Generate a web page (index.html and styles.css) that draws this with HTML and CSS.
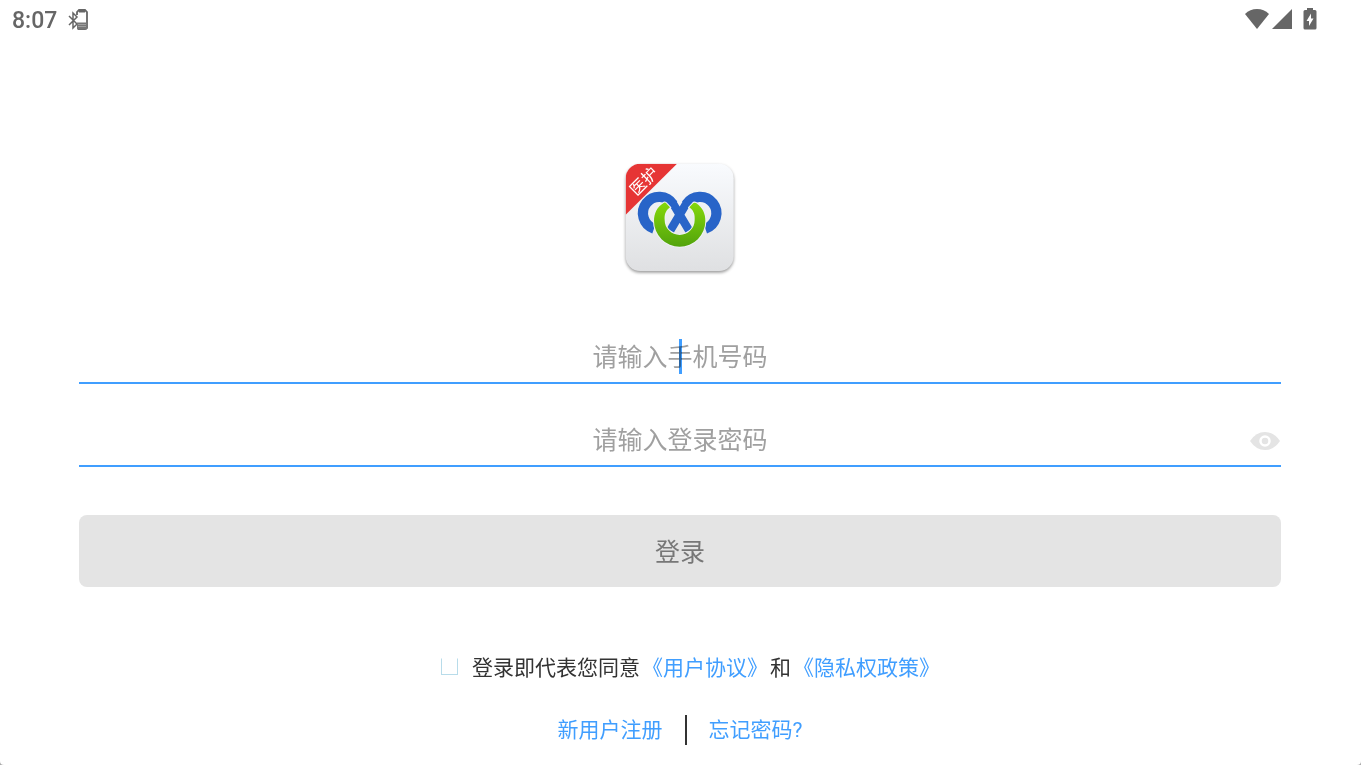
FILE: index.html
```html
<!DOCTYPE html>
<html lang="zh-CN">
<head>
    <meta charset="utf-8">
    <meta name="viewport" content="width=device-width, initial-scale=1.0">
    <title>登录</title>
    <link rel="stylesheet" href="styles.css">
</head>
<body>

    <!-- 状态栏 -->
    <header class="status-bar">
        <div class="status-left">
            <span class="clock">8:07</span>
            <svg class="bt-icon" width="22" height="24" viewBox="0 0 22 24" fill="none" stroke="#666">
                <path d="M1 8l8 8-4 4V5l4 4-8 8" stroke-width="1.5"/>
                <path d="M9 7V4l2-2h6l2 2v16l-2 1h-7" stroke-width="1.8"/>
                <path d="M11 3h6" stroke-width="3"/>
                <path d="M9 14.500h10v7H9z" fill="#777" stroke="none"/>
                <path d="M10 16.500h8M10 18.500h8" stroke="#bbb" stroke-width=".6"/>
            </svg>
        </div>
        <div class="status-right">
            <svg class="wifi-icon" width="26" height="22" viewBox="0 0 26 22">
                <path d="M13 21L1 6Q6 1 13 1t12 5z" fill="#666"/>
            </svg>
            <svg class="signal-icon" width="20" height="20" viewBox="0 0 20 20">
                <path d="M20 0v20H0z" fill="#666"/>
            </svg>
            <svg class="battery-icon" width="14" height="22" viewBox="0 0 14 22">
                <path d="M4 0h6v2h2q1.500 0 1.500 1.500v16.500q0 1.500-1.500 1.500H2q-1.500 0-1.500-1.500V3.500Q.5 2 2 2h2z" fill="#666"/>
                <path d="M8 5.500L3.500 13H6v5l4.500-7.500H8z" fill="#fff"/>
            </svg>
        </div>
    </header>

    <main class="login">
        <svg class="logo" width="130" height="126" viewBox="0 0 390 378" role="img" aria-label="医护">
            <defs>
                <linearGradient id="tile" x1="0" y1="0" x2="0" y2="1">
                    <stop offset="0" stop-color="#f9fbfe"/>
                    <stop offset="1" stop-color="#dfe0e2"/>
                </linearGradient>
                <linearGradient id="green" x1="0" y1="0" x2="0" y2="1">
                    <stop offset="0" stop-color="#85d80b"/>
                    <stop offset="1" stop-color="#52a30c"/>
                </linearGradient>
                <clipPath id="tileClip">
                    <rect x="32" y="26" width="324" height="322" rx="44"/>
                </clipPath>
            </defs>
            <rect class="logo-tile" x="32" y="26" width="324" height="322" rx="44" fill="url(#tile)"/>
            <path d="M32 26h154L32 179z" fill="#e63535" clip-path="url(#tileClip)"/>
            <text class="logo-label" transform="translate(86 78) rotate(-45)" text-anchor="middle" y="18">医护</text>
            <!-- 两个蓝色圆环 -->
            <g fill="none" stroke="#2864c8" stroke-width="31">
                <path d="M117 221A49 49 0 1 1 174 148"/>
                <path d="M271 221A49 49 0 1 0 214 148"/>
                <path d="M172 142L222 226M216 142L166 226" stroke-width="25"/>
            </g>
            <!-- 绿色圆环 -->
            <path d="M147 143Q151 141 155 146L165 157C150 168 148 181 149 195A45 45 0 0 0 239 195C240 181 238 168 223 157L233 146Q237 141 243 144C263 158 271 175 271 198A77 77 0 0 1 117 198C117 174 126 156 147 143Z" fill="url(#green)" stroke="#eef1f5" stroke-width="6" paint-order="stroke"/>
        </svg>

        <form class="login-form">
            <div class="field">
                <input type="tel" placeholder="请输入手机号码" aria-label="手机号码">
                <span class="caret"></span>
            </div>
            <div class="field">
                <input type="password" placeholder="请输入登录密码" aria-label="登录密码">
                <button type="button" class="eye" aria-label="显示密码">
                    <svg width="32" height="20" viewBox="0 0 32 20">
                        <path d="M1 10Q7 1 16 1t15 9q-6 9-15 9T1 10z" fill="#e4e4e4"/>
                        <circle cx="16" cy="10" r="4.500" fill="none" stroke="#fff" stroke-width="2.500"/>
                    </svg>
                </button>
            </div>
            <button type="submit" class="submit">登录</button>

            <div class="agree">
                <input type="checkbox" id="agree">
                <label for="agree">登录即代表您同意</label>
                <a href="#">《用户协议》</a>
                <span>和</span>
                <a href="#">《隐私权政策》</a>
            </div>
        </form>

        <nav class="links">
            <a href="#">新用户注册</a>
            <a href="#">忘记密码?</a>
        </nav>
    </main>

</body>
</html>
```
FILE: styles.css
```css
html {
    background: #aaa;
}

body {
    margin: 0;
    min-height: 100vh;
    background: #fff;
    border-radius: 0 0 4px 4px;
    color: #333;
    font-family: Roboto, "Noto Sans CJK SC", sans-serif;
}

* {
    box-sizing: border-box;
}

a {
    color: #409eff;
    text-decoration: none;
}

svg {
    display: block;
}

/* 状态栏 */
.status-bar {
    display: flex;
    justify-content: space-between;
    height: 40px;
    padding: 0 44px 0 12px;
    color: #666;
}

.status-left,
.status-right {
    display: flex;
    align-items: center;
}

.status-left {
    gap: 11px;
}

.clock {
    font-size: 23px;
    font-weight: 500;
}

.status-right {
    gap: 2px;
    padding-bottom: 3px;
}

.battery-icon {
    margin-left: 9px;
}

/* 登录区域 */
.login {
    display: flex;
    flex-direction: column;
    align-items: center;
    padding: 115px 80px 0 79px;
}

.logo-tile {
    filter: drop-shadow(0 5px 5px rgba(0, 0, 0, 0.4));
}

.logo-label {
    fill: #fff;
    font-size: 48px;
}

.login-form {
    width: 100%;
    margin-top: 48px;
}

.field {
    position: relative;
    display: flex;
    height: 55px;
    border-bottom: 2px solid #409eff;
}

.field + .field {
    margin-top: 28px;
}

.field input {
    flex: 1;
    min-width: 0;
    padding: 4px 0 0;
    border: none;
    outline: none;
    background: none;
    color: #333;
    font-family: inherit;
    font-size: 25px;
    text-align: center;
}

.field input::placeholder {
    color: #a0a0a0;
    opacity: 1;
}

/* 输入光标 */
.caret {
    position: absolute;
    top: 10px;
    left: 50%;
    width: 3px;
    height: 35px;
    margin-left: -1px;
    background: #409eff;
    mix-blend-mode: multiply;
}

.eye {
    position: absolute;
    top: 19px;
    right: 0;
    padding: 0;
    border: none;
    background: none;
    cursor: pointer;
}

.submit {
    width: 100%;
    height: 72px;
    margin-top: 48px;
    padding: 0 0 2px;
    border: none;
    border-radius: 8px;
    background: #e4e4e4;
    color: #777;
    font-family: inherit;
    font-size: 25px;
}

/* 协议 */
.agree {
    display: flex;
    align-items: center;
    justify-content: center;
    gap: 2px;
    height: 32px;
    margin-top: 63px;
    padding-left: 21px;
    font-size: 21px;
}

.agree input {
    appearance: none;
    width: 17px;
    height: 17px;
    margin: 0 12px 0 0;
    border: 1px solid #b8dcea;
    border-top-color: transparent;
}

.links {
    display: flex;
    align-items: center;
    height: 30px;
    margin-top: 33px;
    font-size: 21px;
    line-height: 30px;
}

.links a + a {
    margin-left: 22px;
    padding-left: 22px;
    border-left: 2px solid #333;
}
```
